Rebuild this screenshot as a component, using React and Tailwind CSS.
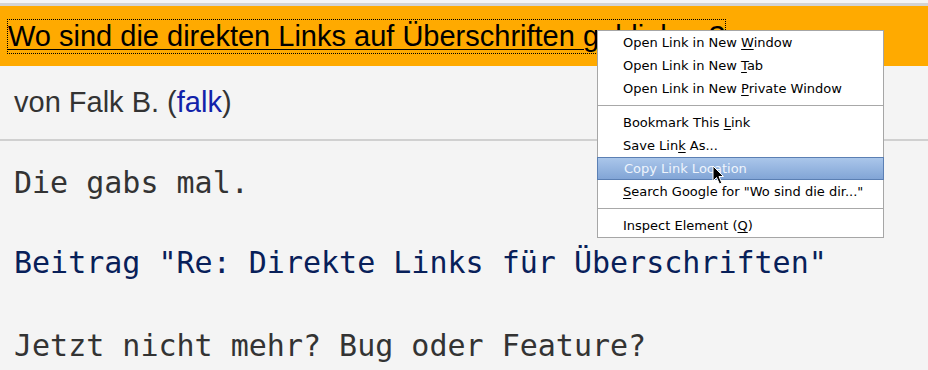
import React from "react";

const sans = { fontFamily: '"Liberation Sans", Arial, sans-serif' };

function U({ children }) {
  return <span className="underline underline-offset-2">{children}</span>;
}

function Item({ children, active }) {
  return (
    <div
      className={
        "h-[23px] flex items-center pl-[25px] " +
        (active
          ? "bg-gradient-to-b from-[#aac6ea] to-[#82a5d6] border border-[#5b7fb3] text-[#eef4fc] -mx-px pl-[26px]"
          : "text-black")
      }
    >
      <span className="whitespace-pre">{children}</span>
    </div>
  );
}

function Sep() {
  return (
    <div className="h-[11px] flex items-center">
      <div className="h-px w-full bg-[#a8a8a8]" />
    </div>
  );
}

export default function App() {
  return (
    <div className="relative w-[928px] h-[370px] overflow-hidden bg-[#f4f4f4] pt-[3px]">
      <div className="border-t-[3px] border-[#d3d3d3] bg-[#ffaa00] h-[63px] flex items-center pl-[8px]">
        <a
          className="text-[29px] leading-[33px] text-black underline decoration-1 underline-offset-[3px] outline-1 outline-dotted outline-black"
          style={sans}
        >
          Wo sind die direkten Links auf Überschriften geblieben?
        </a>
      </div>
      <div
        className="h-[75px] flex items-center pl-[14px] text-[29px] text-[#333] border-b-2 border-[#d0d0d0]"
        style={sans}
      >
        <span>
          von Falk B. (<span className="text-[#1122aa]">falk</span>)
        </span>
      </div>
      <div
        className="pl-[14px] text-[30px] leading-[40px] text-[#333] pt-[22px]"
        style={{ fontFamily: '"DejaVu Sans Mono", monospace' }}
      >
        <p>Die gabs mal.</p>
        <p className="mt-[40px] text-[#082059]">
          Beitrag "Re: Direkte Links für Überschriften"
        </p>
        <p className="mt-[43px]">Jetzt nicht mehr? Bug oder Feature?</p>
      </div>

      <div
        className="absolute left-[597px] top-[30px] w-[287px] bg-white border border-[#a6a6a6] text-[13px]"
        style={{ fontFamily: '"DejaVu Sans", Verdana, sans-serif' }}
      >
        <Item>
          Open Link in New <U>W</U>indow
        </Item>
        <Item>
          Open Link in New <U>T</U>ab
        </Item>
        <Item>
          Open Link in New <U>P</U>rivate Window
        </Item>
        <Sep />
        <Item>
          Bookmark This <U>L</U>ink
        </Item>
        <Item>
          Save Lin<U>k</U> As...
        </Item>
        <Item active>
          Copy Link Loc<U>a</U>tion
        </Item>
        <Item>
          <U>S</U>earch Google for "Wo sind die dir..."
        </Item>
        <Sep />
        <Item>
          Inspect Element (<U>Q</U>)
        </Item>
      </div>

      <svg
        className="absolute left-[712px] top-[165px]"
        width="14"
        height="21"
        viewBox="0 0 14 21"
      >
        <path
          d="M1 1 L1 16 L4.5 12.5 L7.5 19 L9.8 18 L7 11.5 L11.5 11.5 Z"
          fill="black"
          stroke="white"
          strokeWidth="1"
          strokeLinejoin="miter"
        />
      </svg>
    </div>
  );
}
